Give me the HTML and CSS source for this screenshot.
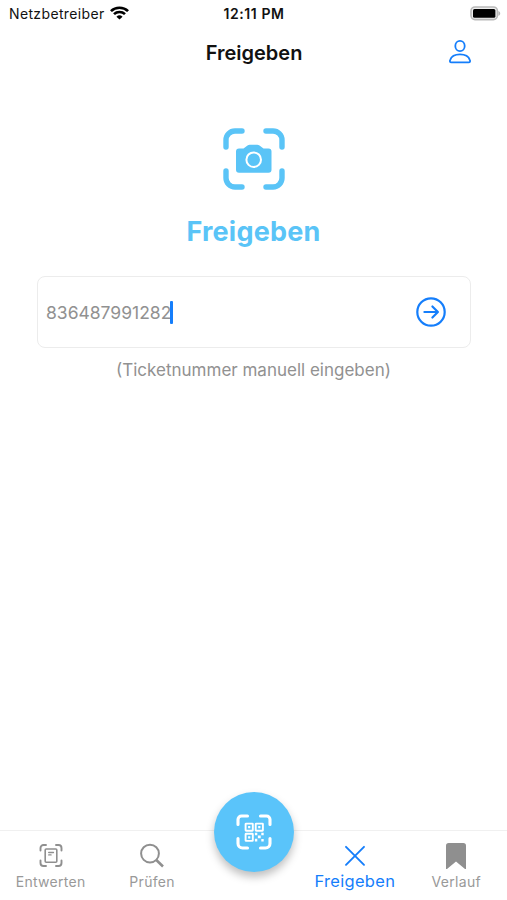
FILE: index.html
```html
<!DOCTYPE html>
<html lang="de">
<head>
  <meta charset="utf-8">
  <title>Freigeben</title>
  <link rel="stylesheet" href="styles.css">
</head>

<body>
  <div class="status-bar">
    <div class="carrier">
      <span class="carrier-name">Netzbetreiber</span>
      <svg width="19" height="14" viewBox="0 0 18 14" preserveAspectRatio="none" fill="none" stroke="#000" stroke-width="2.5">
        <path d="M.9 5.1a11.5 11.5 0 0 1 16.2 0"/>
        <path d="M3.8 8.2a7.4 7.4 0 0 1 10.4 0"/>
        <path d="M9 13.6 6.1 10.7a4.1 4.1 0 0 1 5.8 0z" fill="#000" stroke="none"/>
      </svg>
    </div>
    <span class="clock">12:11 PM</span>
    <svg class="battery" width="31" height="15" viewBox="0 0 31 15">
      <rect x="1" y="1" width="26.4" height="12.6" rx="4" fill="#eee" stroke="#b9b9b9" stroke-width="1.6"/>
      <rect x="3" y="2.9" width="22.400" height="8.800" rx="1.500" fill="#000"/>
      <path d="M28.4 4.9c2.4.8 2.4 4 0 4.8z" fill="#b4b4b4"/>
    </svg>
  </div>

  <header class="nav-bar">
    <h1>Freigeben</h1>
    <svg class="profile" width="24" height="26" viewBox="0 0 24 26" fill="none" stroke="#157efb" stroke-width="1.8">
      <ellipse cx="12" cy="7" rx="4.7" ry="5.2"/>
      <path d="M3.4 23.4h17.2c1.4 0 1.8-1 1.3-2.3C20.7 17.5 16.9 15.400 12 15.400s-8.700 2.100-9.900 5.700c-.5 1.300-.1 2.300 1.300 2.300z"/>
    </svg>
  </header>

  <main>
    <svg class="camera" width="62" height="62" viewBox="0 0 62 62">
      <path d="M19 3H12a9 9 0 0 0-9 9v7M43 3h7a9 9 0 0 1 9 9v7M3 43v7a9 9 0 0 0 9 9h7M59 43v7a9 9 0 0 1-9 9h-7" fill="none" stroke="#5ac4f7" stroke-width="5.4" stroke-linecap="round"/>
      <path d="M16 20.4h4.500l4-3q1-.7 2.200-.7h7.600q1.200 0 2.200.7l4 3H45.500q3 0 3 3v18.400q0 3-3 3H16q-3 0-3-3V23.400q0-3 3-3z" fill="#5ac4f7"/>
      <circle cx="30.7" cy="31.700" r="7.300" fill="none" stroke="#fff" stroke-width="2"/>
    </svg>
    <h2>Freigeben</h2>
    <div class="ticket-box">
      <span class="number">836487991282</span>
      <span class="cursor"></span>
      <svg class="submit" width="30" height="30" viewBox="0 0 30 30" fill="none" stroke="#157efb" stroke-width="2.2" stroke-linecap="round" stroke-linejoin="round">
        <circle cx="15" cy="15" r="13.7"/>
        <path d="M8.4 15h13.400M16.400 9.500l5.500 5.500-5.500 5.500"/>
      </svg>
    </div>
    <p class="hint">(Ticketnummer manuell eingeben)</p>
  </main>

  <nav class="tab-bar">
    <a class="tab">
      <svg width="24" height="26" viewBox="0 0 24 26" fill="none" stroke="#8f8f8f" stroke-width="1.9" stroke-linecap="round">
        <path d="M7 2H4.500A3 3 0 0 0 1.500 5v2.500M17 2h2.500a3 3 0 0 1 3 3v2.500M1.500 17.500V20a3 3 0 0 0 3 3H7M22.500 17.500V20a3 3 0 0 1-3 3H17"/>
        <rect x="6.200" y="6" width="11.600" height="13.200" rx="1" stroke-width="1.600"/>
        <path d="M9.700 9.500h4.800M9.700 11.900h2.400" stroke-width="1.300"/>
      </svg>
      <span>Entwerten</span>
    </a>
    <a class="tab">
      <svg width="26" height="26" viewBox="0 0 26 26" fill="none" stroke="#8f8f8f" stroke-width="2">
        <circle cx="11" cy="10.600" r="8.900"/>
        <path d="m17.300 17 6.700 6.500" stroke-width="2.600"/>
      </svg>
      <span>Prüfen</span>
    </a>
    <div class="tab">
      <div class="scan">
        <svg width="36" height="36" viewBox="0 0 36 36">
          <path d="M11.500 2H5.500A3.500 3.500 0 0 0 2 5.500v5M24.500 2h6A3.500 3.500 0 0 1 34 5.500v5M2 24.500v5A4.500 4.500 0 0 0 6.500 34h5M34 24.500v5a4.500 4.500 0 0 1-4.500 4.500h-5" fill="none" stroke="#fff" stroke-width="3.100" stroke-linecap="round"/>
          <g fill="none" stroke="#fff" stroke-width="1.900">
            <rect x="9.600" y="9.600" width="7.200" height="7.200" rx=".5"/>
            <rect x="19.700" y="9.600" width="7.200" height="7.200" rx=".5"/>
            <rect x="9.600" y="19.700" width="7.200" height="7.200" rx=".5"/>
          </g>
          <path fill="#fff" d="M12.100 12.100h2.200v2.200h-2.200zM22.200 12.100h2.200v2.200h-2.200zM12.100 22.200h2.200v2.200h-2.200zM18.900 18.800h2.400v2.400h-2.400zM25.300 18.800h2.400v2.400h-2.400zM21.900 21.500h2.800v2.800h-2.800zM18.900 24.800h2.400v2.600h-2.400zM25.300 25h2.400v2.400h-2.400z"/>
        </svg>
      </div>
    </div>
    <a class="tab active">
      <svg width="22" height="26" viewBox="0 0 22 26" fill="none" stroke="#157efb" stroke-width="1.9" stroke-linecap="round">
        <path d="m2 3.800 18 18M20 3.800l-18 18"/>
      </svg>
      <span>Freigeben</span>
    </a>
    <a class="tab">
      <svg width="20" height="26" viewBox="0 0 20 26">
        <path d="M2.700 0h14.600Q20 0 20 2.700V25.500q0 1.300-1 .4l-9-7.400-9 7.400q-1 .9-1-.4V2.700Q0 0 2.700 0z" fill="#8f8f8f"/>
      </svg>
      <span>Verlauf</span>
    </a>
  </nav>
</body>
</html>
```
FILE: styles.css
```css
body {
  font-family: Inter, "Liberation Sans", sans-serif;
  background-color: #fff;
  margin: 0;
  height: 900px;
  display: flex;
  flex-direction: column;
  overflow: hidden;
}

svg {
  display: block;
  flex-shrink: 0;
}

.status-bar {
  display: grid;
  grid-template-columns: 1fr auto 1fr;
  align-items: center;
  height: 27px;
  padding: 0 6px 0 9px;
  box-sizing: border-box;
  color: #111;
}

.carrier {
  display: flex;
  align-items: center;
  gap: 5px;
}

.carrier-name {
  font-size: 14px;
  letter-spacing: 0.36px;
}

.carrier svg {
  margin-top: -2px;
}

.clock {
  font-size: 14px;
  font-weight: 600;
  letter-spacing: 0.6px;
  margin-right: 2px;
}

.battery {
  justify-self: end;
}

.nav-bar {
  display: grid;
  grid-template-columns: 1fr auto 1fr;
  align-items: center;
  height: 50px;
  padding: 0 35px;
}

.nav-bar h1 {
  grid-column: 2;
  margin: 1px 0 0 1px;
  font-size: 20px;
  font-weight: 600;
  color: #111;
}

.profile {
  justify-self: end;
}

main {
  flex: 1;
  display: flex;
  flex-direction: column;
  align-items: center;
  padding: 51px 36px 0;
}

main h2 {
  margin: 25px 0 0;
  font-size: 27px;
  line-height: 34px;
  font-weight: 700;
  letter-spacing: 0.2px;
  color: #5ac4f7;
}

.ticket-box {
  display: flex;
  align-items: center;
  align-self: stretch;
  box-sizing: border-box;
  height: 72px;
  margin-top: 27px;
  margin-left: 1px;
  padding: 0 24px 0 8px;
  border: 1px solid #ececec;
  border-radius: 8px;
}

.number {
  font-size: 17.5px;
  color: #919191;
}

.cursor {
  width: 3px;
  height: 23px;
  margin-left: -1px;
  border-radius: 1px;
  background-color: #157efb;
}

.submit {
  margin-left: auto;
}

.hint {
  margin: 11px 0 0;
  font-size: 17px;
  line-height: 22px;
  color: #919191;
}

.tab-bar {
  display: grid;
  grid-template-columns: repeat(5, 1fr);
  height: 70px;
  box-sizing: border-box;
  border-top: 1px solid #f0f0f0;
}

.tab {
  display: flex;
  flex-direction: column;
  align-items: center;
  padding-top: 12px;
  font-size: 14px;
  line-height: 18px;
  letter-spacing: 0.3px;
  color: #999;
}

.tab span {
  margin-top: 4px;
}

.active {
  font-size: 16.5px;
  color: #157efb;
}

.active span {
  margin-top: 3px;
}

/* the scan button sticks out over the top of the bar */
.scan {
  display: flex;
  align-items: center;
  justify-content: center;
  width: 80px;
  height: 80px;
  flex-shrink: 0;
  margin-top: -51px;
  margin-left: 1px;
  border-radius: 50%;
  background-color: #5ac4fa;
  box-shadow: 0 5px 9px rgba(0, 0, 0, 0.25);
}
```
